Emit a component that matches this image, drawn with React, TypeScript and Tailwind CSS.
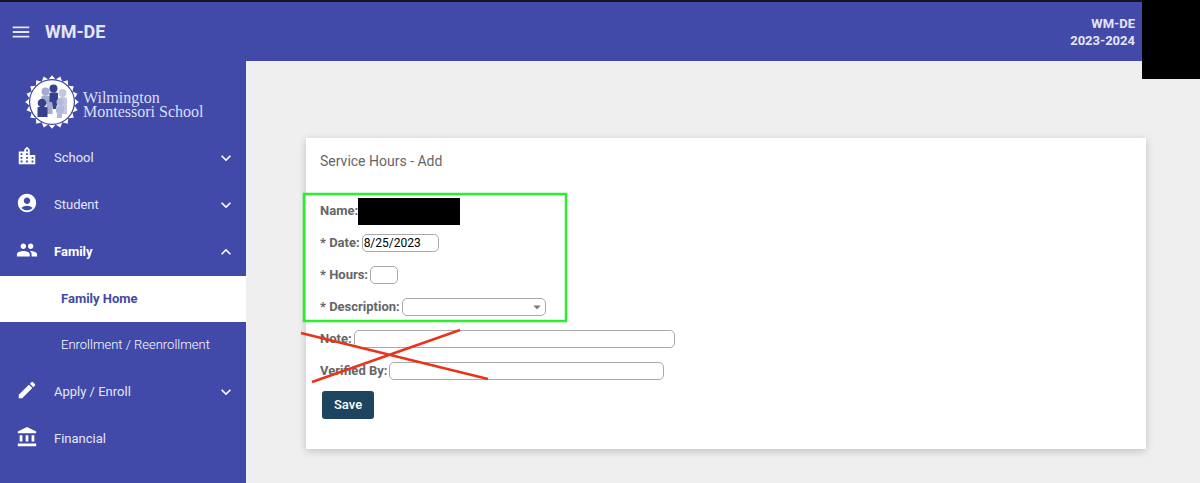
import { useState } from "react";
import type { ReactNode } from "react";
import type { IconType } from "react-icons";
import {
  MdAccountBalance,
  MdAccountCircle,
  MdArrowDropDown,
  MdEdit,
  MdExpandLess,
  MdExpandMore,
  MdLocationCity,
  MdMenu,
  MdPeople,
} from "react-icons/md";

const sealTeeth = Array.from({ length: 20 }, (_, i) => i * 18);

const Logo = () => (
  <div className="flex items-center gap-[3px] pl-6 pt-[13px] pb-1">
    <svg className="h-14 w-14 shrink-0" viewBox="0 0 56 56" aria-hidden="true">
      {sealTeeth.map((angle) => (
        <path key={angle} d="M24.400 5.500 28 1.200l3.600 4.300z" fill="#fff" transform={`rotate(${angle} 28 28)`} />
      ))}
      <circle cx="28" cy="28" r="22.400" fill="#fff" stroke="#424aa9" strokeWidth="1.200" />
      <g fill="#a3abd0">
        <circle cx="21.500" cy="17.500" r="4" />
        <path d="M17.500 22q4-1.600 8 0l3 3v15h-6V30l-5-2z" />
      </g>
      <g fill="#c3c8e2">
        <circle cx="38.500" cy="19" r="4" />
        <path d="M34 24q4.500-2 9 0v16h-7V29h-2z" />
      </g>
      <g fill="#35418f">
        <circle cx="29.500" cy="14.500" r="4" />
        <path d="M25.500 19q4-1.500 8.500 0v9l-2 7h-3l-1-7h-2.500z" />
        <circle cx="18" cy="29" r="4.300" />
        <path d="M13.500 33.500q4.500-2 10 0V43h-10z" />
      </g>
      <g fill="#b3b9d9">
        <circle cx="36" cy="28" r="3.500" />
        <path d="M32 32q4-1.500 8 0v6l-2 1v5h-5v-5l-1-1z" />
      </g>
    </svg>
    <div className="pt-[5px] font-['Liberation_Serif',serif] text-base leading-[14px] text-[#dcdff5]">
      Wilmington
      <br />
      Montessori School
    </div>
  </div>
);

type NavItemProps = {
  icon: IconType;
  label: string;
  arrow?: "up" | "down";
  active?: boolean;
};

const NavItem = ({ icon: Icon, label, arrow, active }: NavItemProps) => (
  <a href="#" className="flex h-[47px] items-center pl-4 pr-[10px] text-white">
    <Icon className="mb-1 h-[22px] w-[22px]" />
    <span className={active ? "ml-4 flex-1 text-[13px] font-bold" : "ml-4 flex-1 text-[13px] text-[#e4e6f8]"}>{label}</span>
    {arrow === "down" && <MdExpandMore className="h-5 w-5" />}
    {arrow === "up" && <MdExpandLess className="h-5 w-5" />}
  </a>
);

const Field = ({ id, label, children }: { id: string; label: string; children: ReactNode }) => (
  <div className="flex h-8 items-center gap-[2px]">
    <label htmlFor={id} className="text-[13px] font-bold text-[#666]">
      {label}
    </label>
    {children}
  </div>
);

export default function App() {
  const [date, setDate] = useState("8/25/2023");
  const [hours, setHours] = useState("");
  const [note, setNote] = useState("");
  const [verifiedBy, setVerifiedBy] = useState("");

  return (
    <div className="relative flex min-h-screen flex-col bg-[#efefef] font-[Roboto,sans-serif]">
      <header className="flex h-[61px] items-center border-t-2 border-[#15131f] bg-[#424aa9] pl-[10px] pr-[65px] text-[#e4e6f8]">
        <button type="button" aria-label="Menu">
          <MdMenu className="h-[22px] w-[22px]" />
        </button>
        <h1 className="ml-[13px] flex-1 text-lg font-bold">WM-DE</h1>
        <div className="text-right text-[13px] font-bold leading-[17px]">
          <div>WM-DE</div>
          <div>2023-2024</div>
        </div>
      </header>
      <div className="absolute right-0 top-0 h-[79px] w-[58px] bg-black" />

      <div className="flex flex-1">
        <nav className="w-[246px] shrink-0 bg-[#424aa9]">
          <Logo />
          <NavItem icon={MdLocationCity} label="School" arrow="down" />
          <NavItem icon={MdAccountCircle} label="Student" arrow="down" />
          <NavItem icon={MdPeople} label="Family" arrow="up" active />
          <div className="pt-px">
            <a href="#" className="flex h-[46px] items-center bg-white pl-[61px] text-[13px] font-bold text-[#424aa9]">
              Family Home
            </a>
            <a href="#" className="flex h-[46px] items-center pl-[61px] text-[13px] font-light text-white">
              Enrollment / Reenrollment
            </a>
          </div>
          <NavItem icon={MdEdit} label="Apply / Enroll" arrow="down" />
          <NavItem icon={MdAccountBalance} label="Financial" />
        </nav>

        <main className="flex-1 pb-8 pl-[60px] pr-[54px] pt-[77px]">
          <section className="relative bg-white px-[14px] pb-[30px] pt-3 shadow-[0_2px_8px_rgba(0,0,0,0.2)]">
            <h2 className="text-sm leading-[22px] text-[#666]">Service Hours - Add</h2>
            <form className="mt-[23px]" onSubmit={(e) => e.preventDefault()}>
              <div className="flex h-8 items-center text-[13px] font-bold text-[#666]">
                Name:
                <span className="h-[27px] w-[102px] bg-black" />
              </div>
              <Field id="date" label="* Date:">
                <input
                  id="date"
                  value={date}
                  onChange={(e) => setDate(e.target.value)}
                  className="h-[18px] w-[77px] rounded-[5px] border border-[#aaa] px-px text-[12px] text-black"
                />
              </Field>
              <Field id="hours" label="* Hours:">
                <input
                  id="hours"
                  value={hours}
                  onChange={(e) => setHours(e.target.value)}
                  className="h-[18px] w-7 rounded-[5px] border border-[#aaa] px-px text-[12px] text-black"
                />
              </Field>
              <Field id="description" label="* Description:">
                <div className="relative flex">
                  <select id="description" className="h-[18px] w-36 appearance-none rounded-[5px] border border-[#aaa] text-[12px]">
                    <option></option>
                  </select>
                  <MdArrowDropDown className="pointer-events-none absolute right-0 top-0 h-[18px] w-[18px] text-[#777]" />
                </div>
              </Field>
              <Field id="note" label="Note:">
                <input
                  id="note"
                  value={note}
                  onChange={(e) => setNote(e.target.value)}
                  className="h-[18px] w-[321px] rounded-[5px] border border-[#aaa] px-px text-[12px]"
                />
              </Field>
              <Field id="verified" label="Verified By:">
                <input
                  id="verified"
                  value={verifiedBy}
                  onChange={(e) => setVerifiedBy(e.target.value)}
                  className="h-[18px] w-[275px] rounded-[5px] border border-[#aaa] px-px text-[12px]"
                />
              </Field>
              <button type="submit" className="ml-[2px] mt-1 flex h-7 items-center rounded-[3px] bg-[#1d4560] px-3 text-[13px] font-medium text-white">
                Save
              </button>
            </form>

            {/* Markup over the form: required fields boxed, unused fields crossed out */}
            <svg
              className="pointer-events-none absolute -left-1 top-[54px] h-[192px] w-[270px] overflow-visible"
              viewBox="0 0 270 192"
              fill="none"
              aria-hidden="true"
            >
              <rect x="2" y="2" width="262" height="127" stroke="#2bee2f" strokeWidth="2.500" />
              <path d="M-1 141 186 187M10 190 158 138" stroke="#e8341c" strokeWidth="2.400" />
            </svg>
          </section>
        </main>
      </div>
    </div>
  );
}
